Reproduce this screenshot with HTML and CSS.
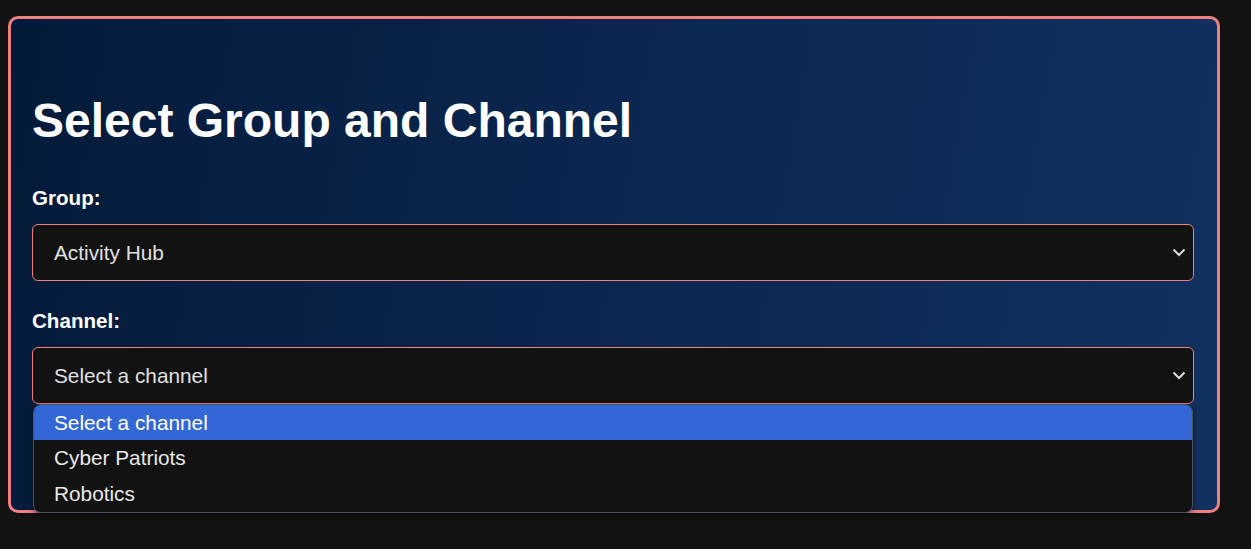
FILE: index.html
```html
<!DOCTYPE html>
<html lang="en">
<head>
<meta charset="utf-8">
<title>Select Group and Channel</title>
<link rel="stylesheet" href="styles.css">
</head>
<body>
  <div class="card">
    <h1 class="title">Select Group and Channel</h1>

    <div class="field">
      <label class="label">Group:</label>
      <div class="select">
        <span class="select-value">Activity Hub</span>
        <svg class="chevron" width="14" height="9" viewBox="0 0 14 9"><path d="M1.5 1.5 L7 7 L12.5 1.5" fill="none" stroke="#dddddd" stroke-width="2"/></svg>
      </div>
    </div>

    <div class="field field-last">
      <label class="label">Channel:</label>
      <div class="select-wrap">
        <div class="select">
          <span class="select-value">Select a channel</span>
          <svg class="chevron" width="14" height="9" viewBox="0 0 14 9"><path d="M1.5 1.5 L7 7 L12.5 1.5" fill="none" stroke="#dddddd" stroke-width="2"/></svg>
        </div>
        <ul class="popup">
          <li class="option option-active">Select a channel</li>
          <li class="option">Cyber Patriots</li>
          <li class="option">Robotics</li>
        </ul>
      </div>
    </div>
  </div>
</body>
</html>
```

FILE: styles.css
```css
html, body {
  margin: 0;
  background: #121212;
}

body {
  padding: 16px 8px;
  font-family: "Liberation Sans", Arial, sans-serif;
}

.card {
  width: 1212px;
  box-sizing: border-box;
  height: 497px;
  border: 3px solid #f08080;
  border-radius: 10px;
  padding: 0 23px 0 21px;
  background: linear-gradient(100deg, #051a39 0%, #0b2750 50%, #11315f 100%);
}

.title {
  margin: 74px 0 38px;
  font-size: 48px;
  font-weight: bold;
  line-height: 55px;
  color: #ffffff;
}

.field {
  margin-bottom: 28px;
}

.label {
  display: block;
  font-size: 20.6px;
  line-height: 23px;
  font-weight: bold;
  color: #ffffff;
  margin-bottom: 15px;
}

.select-wrap {
  position: relative;
}

.select {
  box-sizing: border-box;
  height: 57px;
  display: flex;
  align-items: center;
  justify-content: space-between;
  padding: 0 7px 0 21px;
  background: #121212;
  border: 1px solid #f08080;
  border-radius: 6px;
  color: #e0e0e0;
  font-size: 20.8px;
}

.chevron {
  display: block;
}

.popup {
  position: absolute;
  left: 1px;
  right: 1px;
  top: 57px;
  margin: 0;
  padding: 0;
  list-style: none;
  background: #121212;
  border: 1px solid #4b5260;
  border-radius: 8px;
  overflow: hidden;
  box-shadow: 0 2px 6px rgba(0, 0, 0, 0.5);
}

.option {
  height: 36px;
  display: flex;
  align-items: center;
  padding-left: 20px;
  color: #e8e8e8;
  font-size: 20.8px;
}

.option-active {
  height: 35px;
  background: #3367d6;
  color: #ffffff;
}
```
